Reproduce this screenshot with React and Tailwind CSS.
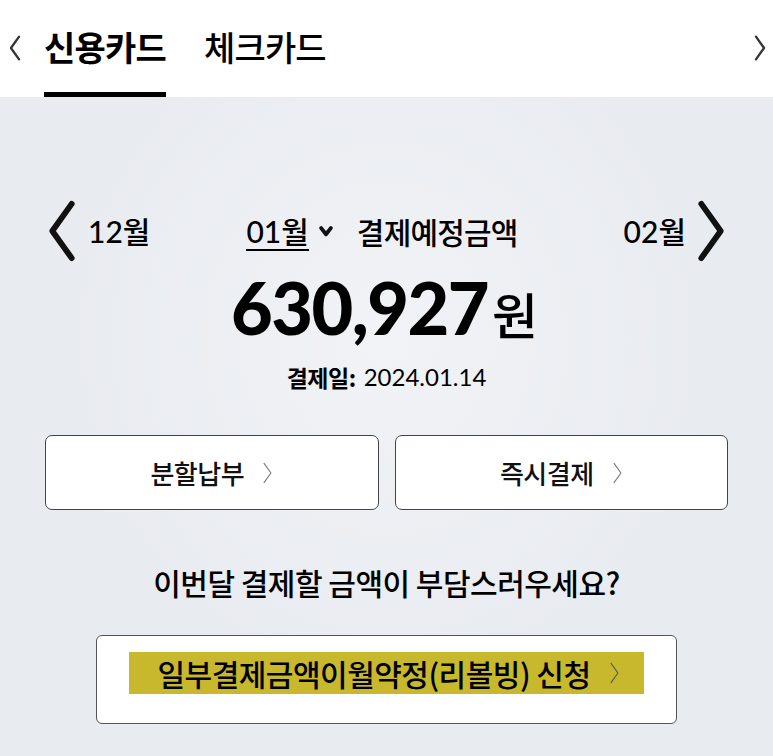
import { useState } from "react";

const KR = { fontFamily: '"Noto Sans CJK KR", "Noto Sans", sans-serif' };
const NUM = { fontFamily: 'Lato, "Noto Sans CJK KR", sans-serif' };

function Chevron({ dir = "right", className = "", stroke = 2 }) {
    const d = dir === "right" ? "M3 2 L13 16 L3 30" : "M13 2 L3 16 L13 30";
    return (
        <svg viewBox="0 0 16 32" className={className} fill="none" stroke="currentColor" strokeWidth={stroke} strokeLinecap="round" strokeLinejoin="round">
            <path d={d} />
        </svg>
    );
}

function ActionButton({ label }) {
    return (
        <button className="flex-1 h-[75px] bg-white border-[1.5px] border-[#444] rounded-[7px] flex items-center justify-center gap-[18px]">
            <span className="text-[26px] font-medium text-[#111] tracking-[-0.5px]">{label}</span>
            <Chevron className="w-[11px] h-[22px] text-[#777]" stroke={1.6} />
        </button>
    );
}

export default function App() {
    const [tab, setTab] = useState(0);
    const tabs = ["신용카드", "체크카드"];

    return (
        <div style={KR} className="w-[773px] h-[756px] overflow-hidden bg-[#e9ecf1] bg-[radial-gradient(ellipse_at_50%_45%,#f1f3f6_0%,#e8ebf0_60%)] text-black">
            <div className="h-[97px] bg-white flex items-stretch">
                <div className="w-[44px] flex items-center justify-center pb-[2px] pr-[14px]">
                    <Chevron dir="left" className="w-[14px] h-[26px] text-[#333]" stroke={2.8} />
                </div>
                <div className="flex gap-[38px] flex-1">
                    {tabs.map((t, i) => (
                        <button key={t} onClick={() => setTab(i)} className="relative flex items-center pb-[4px]">
                            <span className={"text-[34px] tracking-[-0.8px] leading-none " + (tab === i ? "font-bold" : "font-medium")}>{t}</span>
                            {tab === i && <span className="absolute left-0 right-0 bottom-0 h-[5px] bg-black" />}
                        </button>
                    ))}
                </div>
                <div className="w-[40px] flex items-center justify-center pb-[2px] pl-[14px]">
                    <Chevron className="w-[14px] h-[26px] text-[#333]" stroke={2.8} />
                </div>
            </div>

            <div className="px-[45px]">
                <div className="mt-[102px] flex items-center h-[64px]">
                    <Chevron dir="left" className="w-[34px] h-[62px] text-[#111]" stroke={3} />
                    <span style={NUM} className="ml-[9px] text-[30px] font-medium">12<span style={KR}>월</span></span>
                    <div className="ml-[96px] flex items-center">
                        <span style={NUM} className="text-[30px] font-medium border-b-[2px] border-black leading-[36px]">01<span style={KR}>월</span></span>
                        <svg viewBox="0 0 10 8" className="ml-[10px] w-[14px] h-[11px]"><path d="M1.5 1.5 L5 6 L8.5 1.5" fill="none" stroke="#111" strokeWidth="2.8" strokeLinecap="round" strokeLinejoin="round" /></svg>
                        <span className="ml-[24px] text-[30px] font-medium tracking-[-0.8px]">결제예정금액</span>
                    </div>
                    <span style={NUM} className="ml-auto text-[30px] font-medium">02<span style={KR}>월</span></span>
                    <Chevron className="ml-[8px] w-[34px] h-[62px] text-[#111]" stroke={3} />
                </div>

                <div className="flex justify-center items-baseline mt-[4px] pr-[4px]">
                    <span style={NUM} className="text-[72px] font-black tracking-[-1.5px] leading-[80px]">630,927</span>
                    <span className="ml-[4px] text-[50px] font-medium">원</span>
                </div>

                <div className="flex justify-center items-center mt-[8px] gap-[8px]">
                    <span className="text-[23px] font-bold tracking-[-0.5px]">결제일:</span>
                    <span style={NUM} className="text-[24px]">2024.01.14</span>
                </div>

                <div className="flex gap-[16px] mt-[40px]">
                    <ActionButton label="분할납부" />
                    <ActionButton label="즉시결제" />
                </div>

                <div className="text-center mt-[50px] text-[30px] font-medium tracking-[-0.5px]">
                    이번달 결제할 금액이 부담스러우세요?
                </div>

                <div className="mx-[51px] mt-[30px] h-[89px] bg-white border-[1.5px] border-[#555] rounded-[6px] flex items-start justify-center pt-[16px]">
                    <div className="w-[515px] h-[42px] bg-[#c7b82d] flex items-center justify-center gap-[18px] pl-[4px]">
                        <span className="text-[30px] font-medium tracking-[-0.5px] text-black leading-none">일부결제금액이월약정(리볼빙) 신청</span>
                        <Chevron className="w-[11px] h-[22px] text-[#555]" stroke={1.6} />
                    </div>
                </div>
            </div>
        </div>
    );
}
